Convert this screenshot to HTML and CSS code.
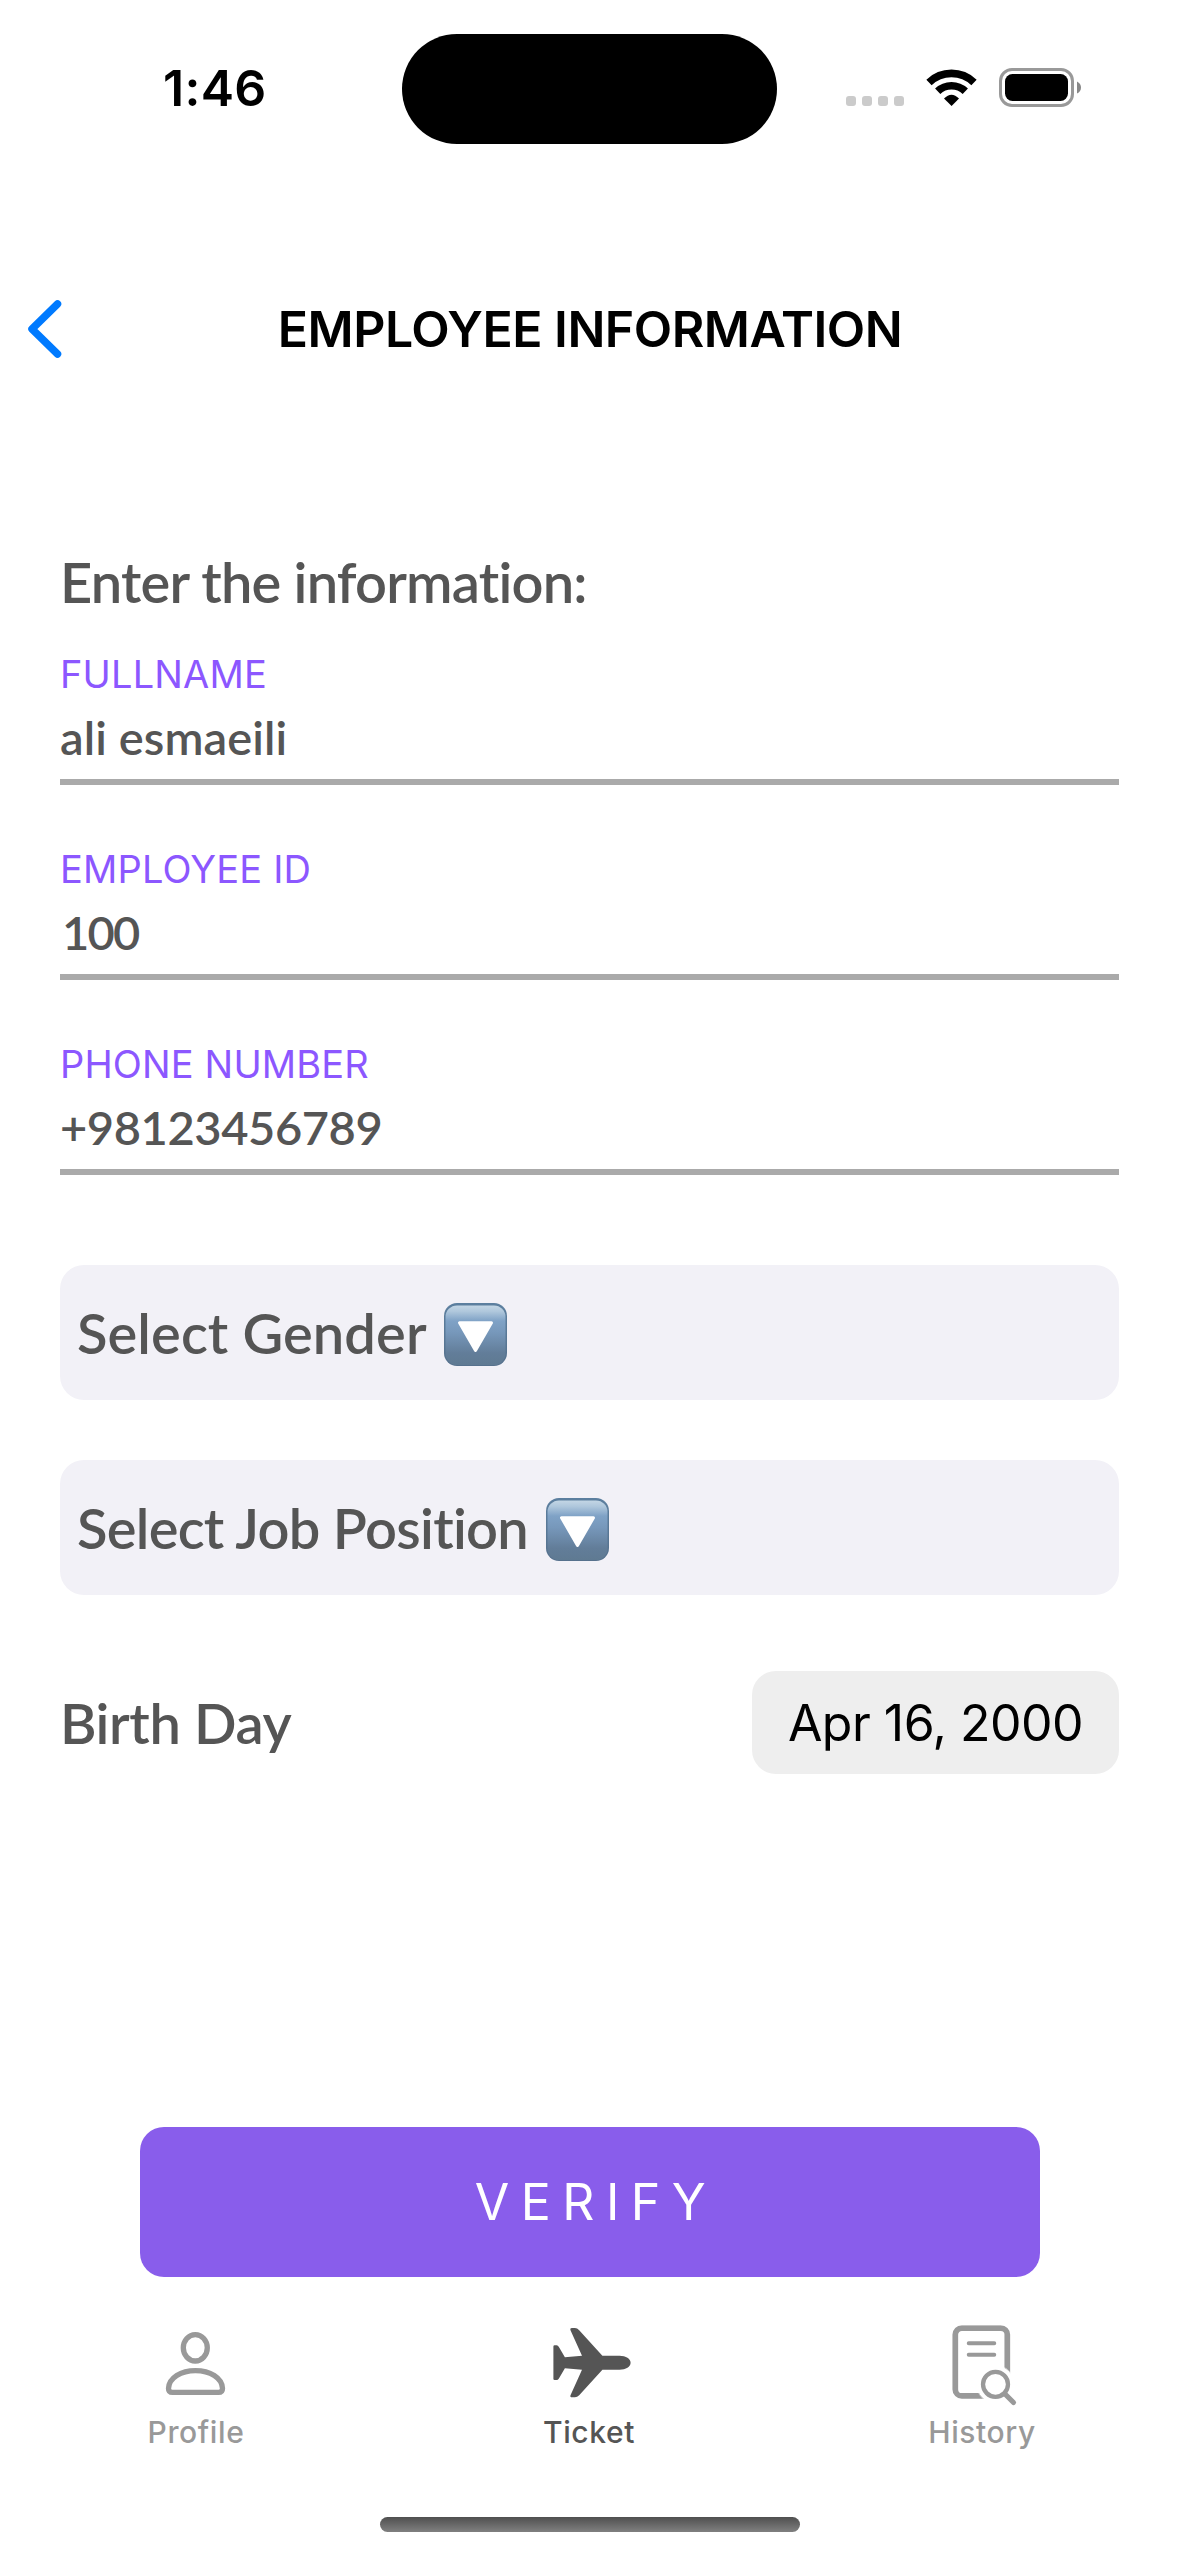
FILE: index.html
```html
<!DOCTYPE html>
<html lang="en">
<head>
<meta charset="utf-8">
<title>Employee Information</title>
<link rel="stylesheet" href="styles.css">
</head>
<body>
<div class="screen">
  <div class="status">
    <span class="time">1:46</span>
    <div class="island"></div>
    <svg class="indicators" width="240" height="40" viewBox="0 0 240 40">
      <g fill="#cbcbcb">
        <rect x="0" y="28" width="10" height="10" rx="3"/>
        <rect x="16" y="28" width="10" height="10" rx="3"/>
        <rect x="32" y="28" width="10" height="10" rx="3"/>
        <rect x="48" y="28" width="10" height="10" rx="3"/>
      </g>
      <g fill="none" stroke="#000" stroke-width="7.6">
        <path d="M83 14.4A32.5 32.5 0 0 1 128 14.4"/>
        <path d="M91.7 23.3A20 20 0 0 1 119.3 23.3"/>
      </g>
      <path d="M98 30.6Q105.500 23 113 30.600L105.600 38Z"/>
      <rect x="154.500" y="1.500" width="72" height="36" rx="11.500" fill="none" stroke="#999" stroke-width="3"/>
      <rect x="159" y="6" width="63" height="27" rx="7.500"/>
      <path d="M231 13.500Q235 15.500 235 19.500T231 25.500Z" fill="#888"/>
    </svg>
  </div>
  <header class="header">
    <svg class="back" width="40" height="60" viewBox="0 0 40 60">
      <path d="M33.500 5L8 30 33.500 55"/>
    </svg>
    <h1 class="title">EMPLOYEE INFORMATION</h1>
  </header>
  <main class="form">
    <h2 class="heading">Enter the information:</h2>
    <div class="fields">
      <div class="field">
        <div class="label">FULLNAME</div>
        <div class="value">ali esmaeili</div>
      </div>
      <div class="field">
        <div class="label">EMPLOYEE ID</div>
        <div class="value value-id">100</div>
      </div>
      <div class="field">
        <div class="label">PHONE NUMBER</div>
        <div class="value value-phone">+98123456789</div>
      </div>
    </div>
    <div class="selects">
      <div class="select">
        <span class="select-gender">Select Gender</span>
        <svg class="drop" width="63" height="63" viewBox="0 0 63 63">
          <defs>
            <linearGradient id="face" x1="0" y1="0" x2="0" y2="1">
              <stop offset="0" stop-color="#c3d6e5"/>
              <stop offset=".1" stop-color="#afc7dc"/>
              <stop offset=".26" stop-color="#7fa2c6"/>
              <stop offset=".45" stop-color="#7798bb"/>
              <stop offset=".8" stop-color="#627d99"/>
              <stop offset="1" stop-color="#5f7a92"/>
            </linearGradient>
            <linearGradient id="rim" x1="0" y1="0" x2="0" y2="1">
              <stop offset="0" stop-color="#5c7f9f"/>
              <stop offset="1" stop-color="#56718d"/>
            </linearGradient>
          </defs>
          <rect width="63" height="63" rx="13" fill="url(#rim)"/>
          <rect x="1.500" y="2.500" width="60" height="59.500" rx="11.500" fill="url(#face)"/>
          <path d="M15.500 19.700H47.500L31.500 47.500Z" fill="#fff" stroke="#fff" stroke-width="3" stroke-linejoin="round"/>
        </svg>
      </div>
      <div class="select">
        <span class="select-job">Select Job Position</span>
        <svg class="drop" width="63" height="63" viewBox="0 0 63 63">
          <rect width="63" height="63" rx="13" fill="url(#rim)"/>
          <rect x="1.500" y="2.500" width="60" height="59.500" rx="11.500" fill="url(#face)"/>
          <path d="M15.500 19.700H47.500L31.500 47.500Z" fill="#fff" stroke="#fff" stroke-width="3" stroke-linejoin="round"/>
        </svg>
      </div>
    </div>
    <div class="birth">
      <span class="birth-label">Birth Day</span>
      <div class="date">Apr 16, 2000</div>
    </div>
    <button class="verify">VERIFY</button>
  </main>
  <nav class="tabs">
    <div class="tab">
      <svg width="90" height="82" viewBox="0 0 90 82" fill="none" stroke="currentColor" stroke-width="5.300">
        <ellipse cx="44.300" cy="22.800" rx="12" ry="13.200"/>
        <path d="M21.500 67.400H67.500Q71.500 67.400 71.500 63.400C71 53 59 45.600 44.500 45.600S18 53 17.500 63.400Q17.500 67.400 21.500 67.400Z"/>
      </svg>
      <span>Profile</span>
    </div>
    <div class="tab active">
      <svg width="90" height="82" viewBox="0 0 90 82" fill="currentColor">
        <path d="M58.400 30.700H75.500C82 30.700 86.600 33.800 86.600 37.700S82 44.700 75.500 44.700H58.400L35.200 70.200Q33.200 72.300 30.900 72.300H27.900Q25.800 72.300 26.500 70.200L38 44.700 20.900 43.200 14.900 53.500Q14 55.100 12.600 55.100H10.600Q9.400 55.100 9.400 54V21.400Q9.400 20.300 10.600 20.300H12.600Q14 20.300 14.900 21.900L20.900 32.300 38 30.700 26.500 5.200Q25.800 3.100 27.900 3.100H30.900Q33.200 3.100 35.200 5.200Z"/>
      </svg>
      <span>Ticket</span>
    </div>
    <div class="tab">
      <svg width="90" height="82" viewBox="0 0 90 82" fill="none" stroke="currentColor">
        <mask id="lens-gap" maskUnits="userSpaceOnUse" x="0" y="0" width="90" height="82">
          <rect width="90" height="82" fill="#fff"/>
          <circle cx="58.500" cy="59.300" r="19" fill="#000"/>
        </mask>
        <rect x="18.300" y="3.100" width="52" height="67.800" rx="6.500" stroke-width="5.700" mask="url(#lens-gap)"/>
        <path d="M31.700 18.200H57.300M31.700 29.800H57.300" stroke-width="3.900" stroke-linecap="round"/>
        <circle cx="58.500" cy="59.300" r="12.500" stroke-width="4.300"/>
        <path d="M68 69L76.500 77.500" stroke-width="5.200" stroke-linecap="round"/>
      </svg>
      <span>History</span>
    </div>
  </nav>
  <div class="home-bar"></div>
</div>
</body>
</html>
```
FILE: styles.css
```css
* {
  box-sizing: border-box;
  margin: 0;
  padding: 0;
}

body {
  background: #fff;
  color: #000;
  font-family: Inter, sans-serif;
}

.screen {
  width: 1179px;
  height: 2556px;
  display: flex;
  flex-direction: column;
  align-items: stretch;
  overflow: hidden;
}

.status {
  height: 177px;
  display: grid;
  grid-template-columns: 402px 375px 402px;
  align-items: center;
}

.time {
  padding: 0 0 2px 163px;
  font-size: 50px;
  font-weight: 600;
  line-height: 60px;
  letter-spacing: 0.3px;
}

.island {
  height: 110px;
  margin-top: 1px;
  border-radius: 55px;
  background: #000;
}

.indicators {
  margin: 0 0 1px 69px;
}

.header {
  height: 304px;
  display: grid;
  grid-template-columns: 120px 1fr 120px;
  align-items: center;
}

.back {
  margin-left: 23.500px;
  fill: none;
  stroke: #007aff;
  stroke-width: 7.500;
  stroke-linecap: round;
  stroke-linejoin: round;
}

.title {
  padding-left: 1px;
  text-align: center;
  font-size: 50px;
  font-weight: 600;
  line-height: 60px;
  letter-spacing: -0.5px;
}

.form {
  display: flex;
  flex-direction: column;
  padding: 67px 60px 0;
}

.heading,
.value,
.select,
.birth-label {
  color: #555;
  font-family: Lato, sans-serif;
  font-size: 56px;
  font-weight: 600;
  line-height: 68px;
  font-variant-ligatures: none;
}

.heading {
  letter-spacing: -0.8px;
}

.fields {
  display: flex;
  flex-direction: column;
  gap: 61px;
  margin-top: 35px;
}

.field {
  height: 134px;
  border-bottom: 6px solid #aaa;
}

.label {
  color: #8c57ff;
  font-size: 38px;
  line-height: 46px;
  letter-spacing: 0.15px;
}

.value {
  margin-top: 12px;
  font-size: 47px;
  line-height: 56px;
  letter-spacing: 0.1px;
}

.value-id {
  padding-left: 2px;
  letter-spacing: -1.8px;
}

.value-phone {
  letter-spacing: -0.4px;
}

.selects {
  display: flex;
  flex-direction: column;
  gap: 60px;
  margin-top: 90px;
}

.select {
  height: 135px;
  display: flex;
  align-items: center;
  padding-left: 17px;
  border-radius: 24px;
  background: #f2f1f7;
}

.select-gender {
  width: 367px;
  letter-spacing: 0.1px;
}

.select-job {
  width: 469px;
  letter-spacing: -0.7px;
}

.drop {
  margin-top: 4px;
}

.birth {
  display: flex;
  align-items: center;
  justify-content: space-between;
  margin-top: 76px;
}

.birth-label {
  letter-spacing: -0.4px;
}

.date {
  width: 367px;
  height: 103px;
  border-radius: 24px;
  background: #eee;
  text-align: center;
  font-size: 50px;
  line-height: 104px;
  letter-spacing: -0.5px;
}

.verify {
  width: 900px;
  height: 150px;
  align-self: center;
  margin-top: 353px;
  padding-left: 13px;
  border: 0;
  border-radius: 24px;
  background: #895deb;
  color: #fff;
  font-family: Inter, sans-serif;
  font-size: 50px;
  font-weight: 400;
  line-height: 60px;
  letter-spacing: 11.5px;
}

.tabs {
  display: grid;
  grid-template-columns: repeat(3, 1fr);
  margin: 48px 1px 0 -1px;
}

.tab {
  display: flex;
  flex-direction: column;
  align-items: center;
  gap: 7px;
  color: #999;
  font-size: 30px;
  font-weight: 500;
  line-height: 36px;
  letter-spacing: 0.6px;
}

.tab span {
  padding-left: 1px;
}

.tab.active {
  color: #555;
}

.home-bar {
  width: 420px;
  height: 15px;
  align-self: center;
  margin-top: 67px;
  border-radius: 8px;
  background: linear-gradient(#4f4f4f, #808080);
}
```
